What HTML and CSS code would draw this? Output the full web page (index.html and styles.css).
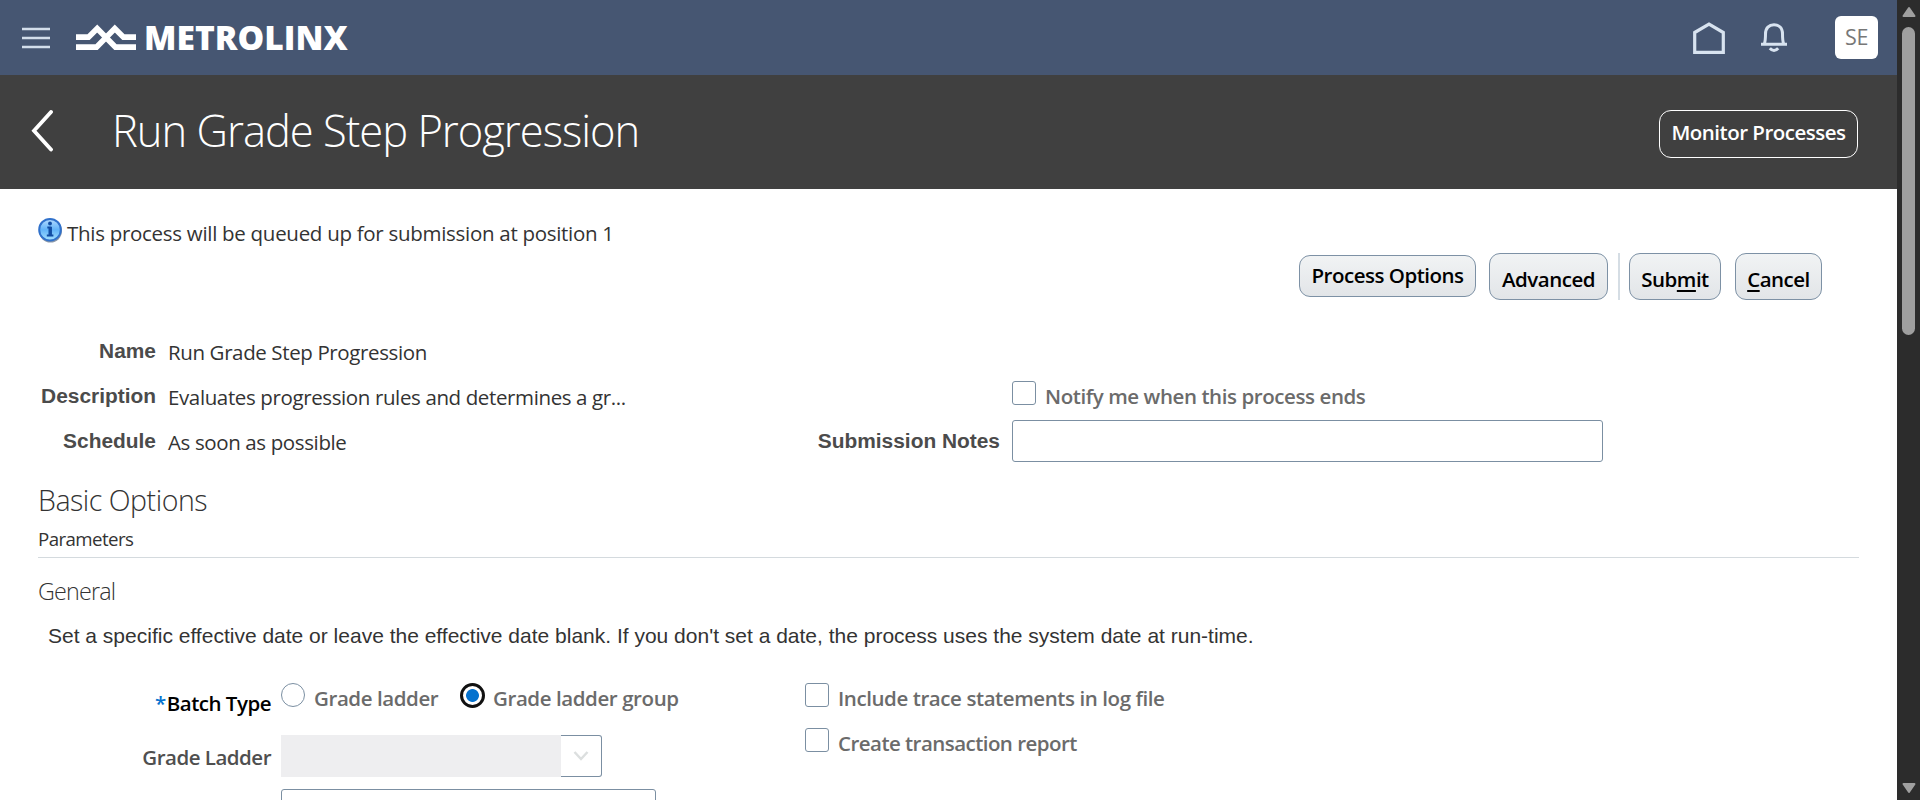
FILE: index.html
```html
<!DOCTYPE html>
<html lang="en">
<head>
<meta charset="utf-8">
<title>Run Grade Step Progression</title>
<link rel="stylesheet" href="styles.css">
</head>
<body>
<div class="app">
  <main class="page">
    <header class="brandbar">
      <svg class="menu" width="28" height="22" viewBox="0 0 28 22"><path d="M0 2h28M0 11h28M0 20h28" stroke="#d3deeb" stroke-width="2.6"/></svg>
      <svg class="mark" width="62" height="28" viewBox="0 0 62 28" fill="none" stroke="#fff" stroke-width="5.7">
        <path d="M1 14.200H13.500L22.200 5.500L40.500 24.200H61"/>
        <path d="M1 24.200H21.500L39.800 5.500L48.500 14.200H61"/>
      </svg>
      <span class="wordmark">METROLINX</span>
      <svg class="home" width="32" height="32" viewBox="0 0 32 32"><path d="M1.700 10.500L16 2L30.300 10.500V30.300H1.700Z" fill="none" stroke="#d8e3f0" stroke-width="3.200"/></svg>
      <svg class="bell" width="26" height="30" viewBox="0 0 26 30" fill="none" stroke="#d8e3f0" stroke-width="3"><path d="M0 21.200H26M3.300 20.800Q4.500 18 4.500 11C4.500 5 8 1.800 13 1.800S21.500 5 21.500 11Q21.500 18 22.700 20.800"/><path d="M8.800 25.200Q13 29.800 17.200 25.200"/></svg>
      <span class="avatar">SE</span>
    </header>
    <div class="titlebar">
      <svg class="back" width="22" height="42" viewBox="0 0 22 42"><path d="M20 2L3 20.800L20 39.500" fill="none" stroke="#fff" stroke-width="3.800" stroke-linecap="round"/></svg>
      <h1>Run Grade Step Progression</h1>
      <button class="monitor">Monitor Processes</button>
    </div>
    <section class="content">
      <div class="notice">
        <svg class="info" width="25" height="26" viewBox="0 0 25 26"><defs><linearGradient id="ig" x1="0" y1="0" x2="0" y2="1"><stop offset="0" stop-color="#b5dcff"/><stop offset=".5" stop-color="#62b3f8"/><stop offset="1" stop-color="#a4e1ff"/></linearGradient></defs><circle cx="12.500" cy="14" r="11.500" fill="#8b98a8"/><circle cx="12" cy="12.700" r="10.800" fill="url(#ig)" stroke="#3071cb" stroke-width="2"/><path d="M9.300 10.500h3.200v8M8.800 18.500h6.600" stroke="#114da4" stroke-width="2" fill="none"/><path d="M12.200 10v8.500" stroke="#114da4" stroke-width="3.400"/><circle cx="12" cy="6.500" r="1.900" fill="#114da4"/></svg>
        <span>This process will be queued up for submission at position 1</span>
      </div>
      <div class="actions">
        <button class="btn short">Process Options</button>
        <button class="btn adv">Advanced</button>
        <i class="split"></i>
        <button class="btn sub">Sub<u>m</u>it</button>
        <button class="btn can"><u>C</u>ancel</button>
      </div>
      <div class="details">
        <div class="col-left">
          <b>Name</b><span class="val">Run Grade Step Progression</span>
          <b>Description</b><span class="val">Evaluates progression rules and determines a gr...</span>
          <b>Schedule</b><span class="val">As soon as possible</span>
        </div>
        <div class="col-right">
          <label class="check notify"><i class="box"></i><span>Notify me when this process ends</span></label>
          <b>Submission Notes</b><input class="notes" type="text">
        </div>
      </div>
      <h2>Basic Options</h2>
      <div class="params">Parameters</div>
      <h3>General</h3>
      <p class="hint">Set a specific effective date or leave the effective date blank. If you don't set a date, the process uses the system date at run-time.</p>
      <div class="options">
        <div class="opt-left">
          <div class="lbl batch"><em>*</em>Batch Type</div>
          <div class="radios">
            <label class="check first"><i class="radio"></i><span>Grade ladder</span></label>
            <label class="check"><i class="radio on"></i><span>Grade ladder group</span></label>
          </div>
          <div class="lbl ladder">Grade Ladder</div>
          <div class="select"><i class="field"></i><i class="drop"><svg width="16" height="12" viewBox="0 0 16 12"><path d="M1.500 2L8 9L14.500 2" fill="none" stroke="#dcdfdf" stroke-width="2.500"/></svg></i></div>
          <i></i><input class="next" type="text">
        </div>
        <div class="opt-right">
          <label class="check"><i class="box"></i><span>Include trace statements in log file</span></label>
          <label class="check report"><i class="box"></i><span>Create transaction report</span></label>
        </div>
      </div>
    </section>
  </main>
  <aside class="scroll"><svg width="14" height="12" viewBox="0 0 14 12"><path d="M7 2L12.500 10H1.500Z" fill="#9f9f9f" stroke="#9f9f9f" stroke-width="2" stroke-linejoin="round"/></svg><i class="thumb"></i><svg class="down" width="14" height="12" viewBox="0 0 14 12"><path d="M7 10L12.500 2H1.500Z" fill="#9f9f9f" stroke="#9f9f9f" stroke-width="2" stroke-linejoin="round"/></svg></aside>
</div>
</body>
</html>
```
FILE: styles.css
```css
* { box-sizing: border-box; }
body { margin: 0; background: #fff; font: 20.5px/28px "Open Sans", sans-serif; letter-spacing: -.29px; color: #333; overflow: hidden; white-space: nowrap; }
i, em { font-style: normal; }
h1, h2, h3, p { margin: 0; font-weight: 300; }
svg { display: block; flex: none; }
button { font: 600 20.5px/28px "Open Sans", sans-serif; letter-spacing: -.5px; padding: 0; white-space: nowrap; }
b { font: bold 20.9px/42px "Liberation Sans", sans-serif; letter-spacing: 0; color: #4b4b4b; text-align: right; }

.app { display: flex; width: 1920px; height: 800px; overflow: hidden; }
.page { width: 1897px; flex: none; overflow: hidden; }

.brandbar { display: flex; align-items: flex-start; height: 75px; background: #465672; }
.menu { margin: 27px 0 0 22px; }
.mark { margin: 23px 0 0 25px; }
.wordmark { margin: 17px 0 0 7px; font: 800 33.6px/40px "Open Sans", sans-serif; letter-spacing: 0; color: #fff; }
.home { margin: 22px 0 0 auto; }
.bell { margin: 23px 0 0 36px; }
.avatar { width: 43px; height: 43px; margin: 16px 19px 0 48px; border-radius: 6px; background: #fff; color: #777; text-align: center; font: 21.5px/42px "Open Sans", sans-serif; }

.titlebar { display: flex; align-items: flex-start; height: 114px; background: #404040; color: #fff; }
.back { margin: 35px 0 0 31px; }
h1 { margin: 26px 0 0 59px; font-size: 43.5px; line-height: 60px; letter-spacing: -1px; }
.monitor { width: 199px; height: 48px; margin: 35px 39px 0 auto; padding-bottom: 4px; border: 1px solid #fff; border-radius: 12px; background: none; color: #fff; }

.content { padding: 28px 38px 0; }
.notice { display: flex; height: 36px; gap: 4px; }
.notice > span { margin-top: 2px; }
.actions { display: flex; justify-content: flex-end; height: 47px; padding-right: 37px; }
.btn { height: 47px; border: 1px solid #7d91a5; border-radius: 11px; background: linear-gradient(#f1f3f4, #e2e5e8); color: #000; padding-top: 5px; }
.short { width: 177px; height: 42px; margin: 2px 13px 0 0; padding: 0 0 2px; }
.adv { width: 119px; }
.split { width: 2px; margin: 0 9px 0 10px; background: #d5dde4; }
.sub { width: 92px; }
.can { width: 87px; margin-left: 14px; }
u { text-decoration-thickness: 2px; text-underline-offset: 3px; }

.details { display: flex; height: 135px; margin-top: 30px; }
.col-left { display: grid; grid-template: repeat(3, 45px) / 118px 600px; column-gap: 12px; line-height: 45px; }
.val { letter-spacing: -.38px; }
.col-right { display: grid; grid-template: 45px 45px / 232px 591px; column-gap: 12px; padding-top: 45px; }
.check { display: flex; gap: 9px; color: #6b6b6b; font-weight: 600; line-height: 30px; letter-spacing: -.42px; }
.notify { grid-column: 2; padding-top: 6px; }
.box { width: 24px; height: 24px; border: 1px solid #7b8fa2; border-radius: 3px; }
input { border: 1px solid #7b8fa2; border-radius: 3px; background: #fff; padding: 0; }
.notes { height: 42px; }

h2 { margin-top: 10px; font-size: 28.5px; line-height: 50px; letter-spacing: -.47px; }
.params { height: 33px; border-bottom: 1px solid #d4dade; font-size: 18.7px; line-height: 28px; letter-spacing: -.58px; }
h3 { margin-top: 13px; font-size: 23.3px; line-height: 40px; letter-spacing: -.8px; }
.hint { margin: 10px 0 0 10px; font: 21px/30px "Liberation Sans", sans-serif; letter-spacing: 0; }

.options { display: flex; padding-top: 32px; }
.opt-left { display: grid; grid-template: 52px 54px 42px / 233px 524px; column-gap: 10px; }
.lbl { display: flex; justify-content: flex-end; line-height: 30px; font-weight: 600; color: #4f4f4f; letter-spacing: -.5px; }
.batch { color: #000; padding-top: 5px; }
.batch em { color: #0572ce; margin-right: 1px; }
.ladder { padding-top: 7px; }
.radios { display: flex; }
.first { width: 179px; }
.radio { width: 24px; height: 24px; border: 1px solid #7b8fa2; border-radius: 50%; }
.on { width: 25px; height: 25px; margin-right: -1px; border: 3px solid #111; background: radial-gradient(#0572ce 6px, #fff 6.8px); }
.select { display: flex; height: 42px; }
.field { width: 280px; background: #eeeef0; }
.drop { display: grid; place-items: center; width: 41px; border: 1px solid #7b8fa2; border-left: 0; border-radius: 0 3px 3px 0; }
.next { width: 375px; height: 42px; }
.opt-right .check { height: 45px; }
.opt-right .report { letter-spacing: -.54px; }

.scroll { display: flex; flex-direction: column; align-items: center; width: 23px; height: 800px; padding: 6px 0; background: #2c2c2c; }
.thumb { width: 13px; height: 308px; margin-top: 9px; border-radius: 7px; background: #9f9f9f; }
.down { margin-top: auto; }
```
